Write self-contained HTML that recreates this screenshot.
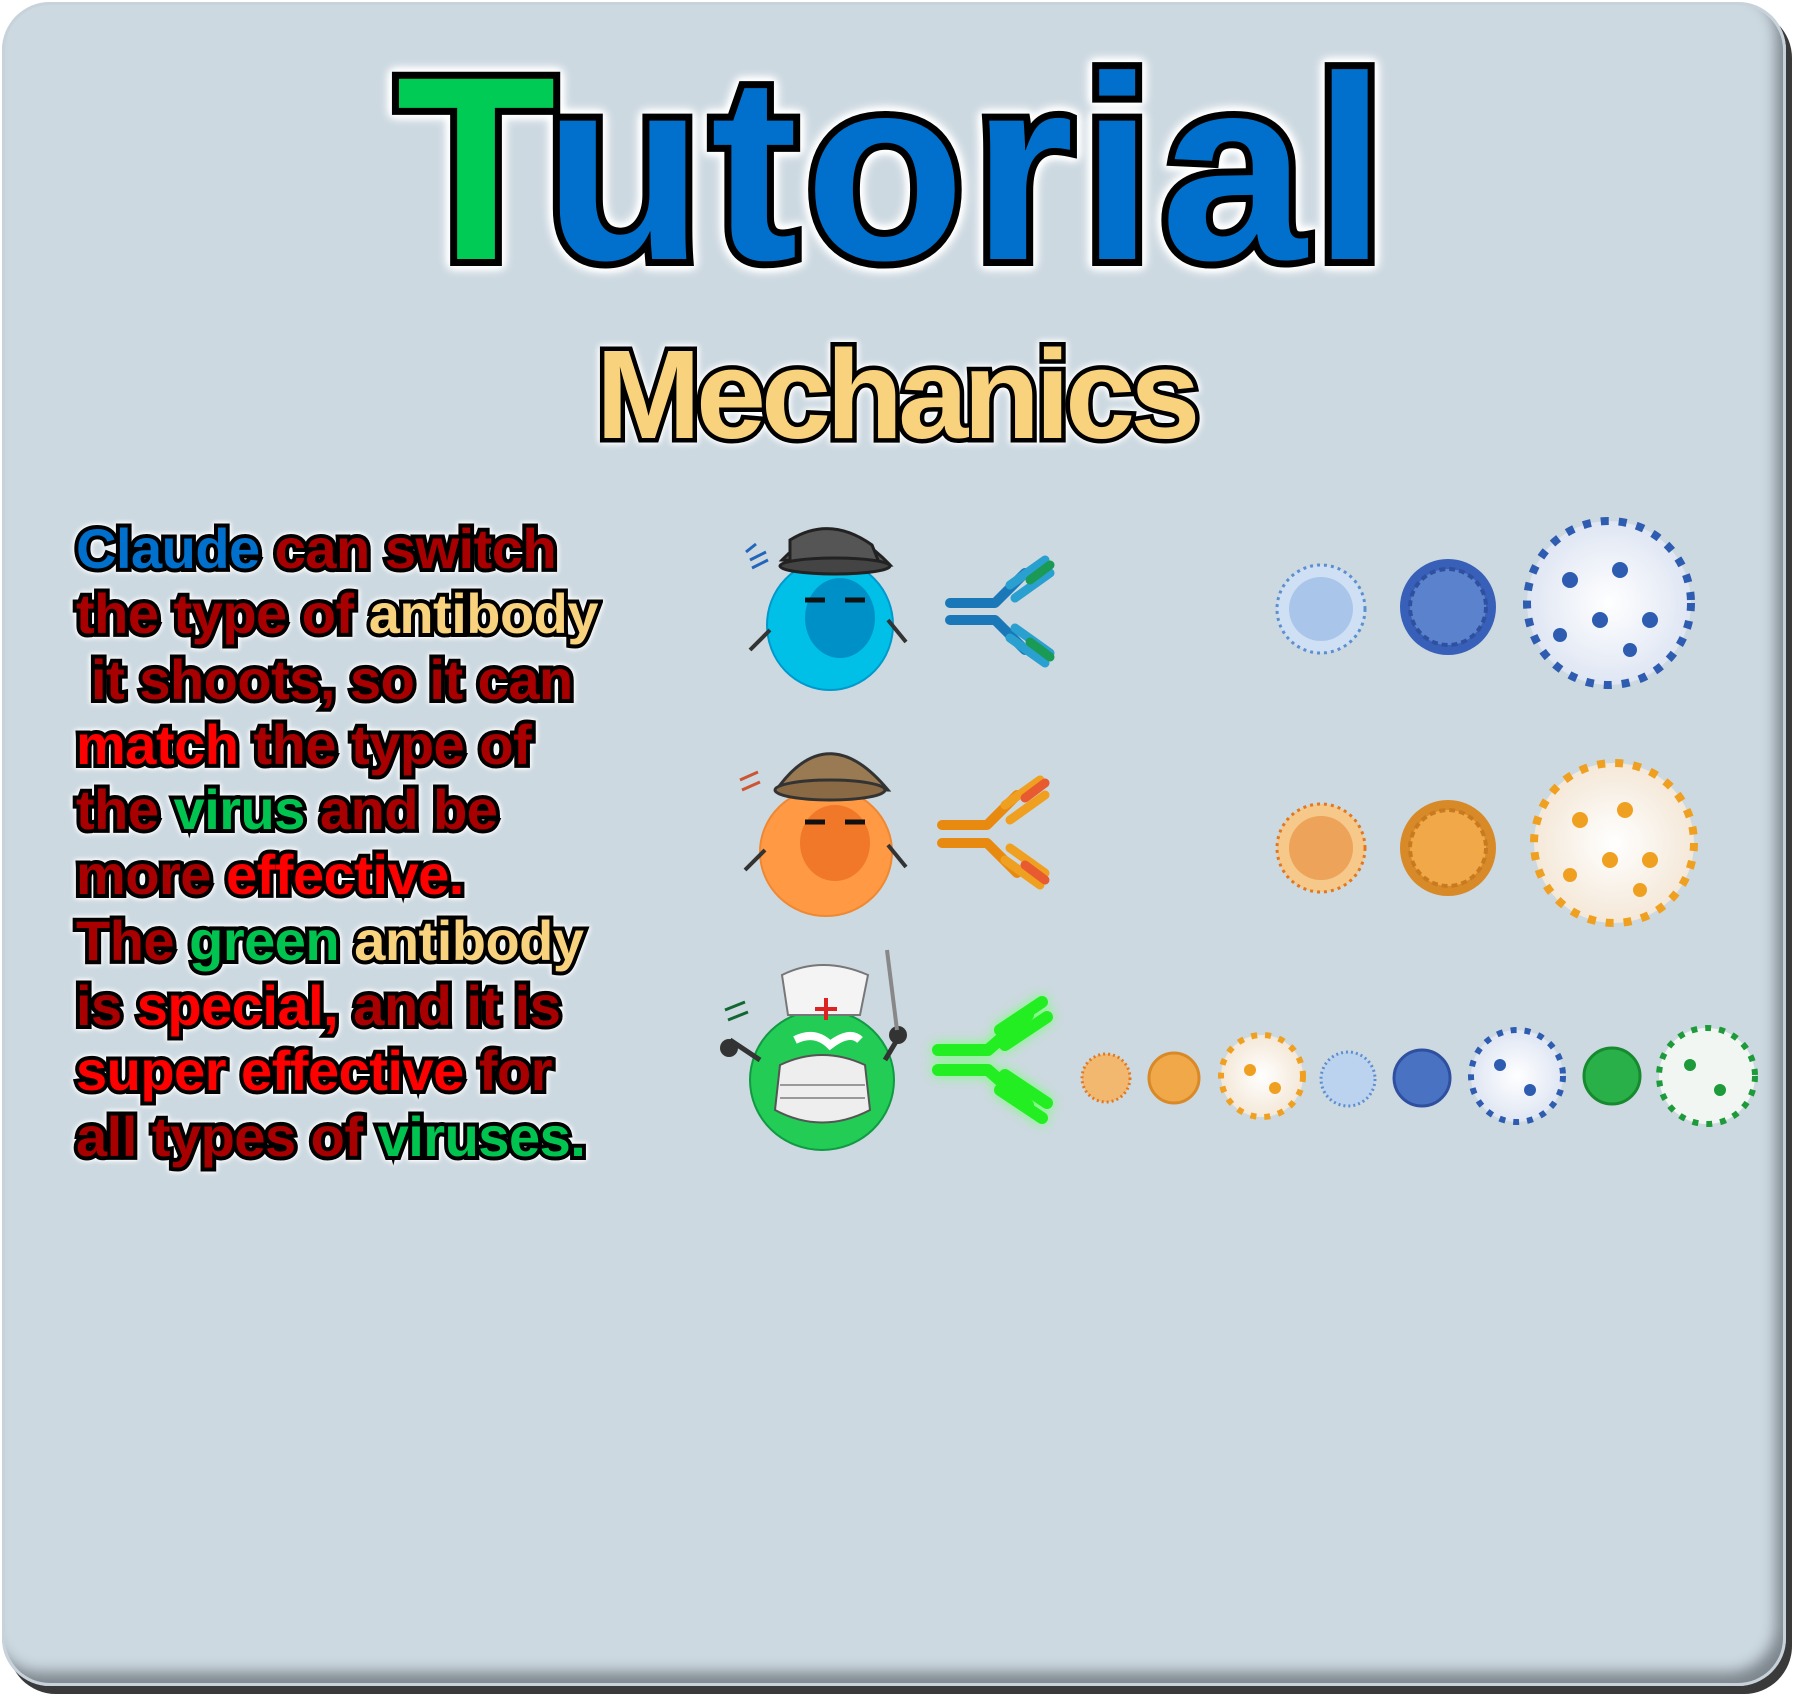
<!DOCTYPE html>
<html><head><meta charset="utf-8">
<style>
html,body{margin:0;padding:0;width:1800px;height:1700px;background:#fff;overflow:hidden}
.panel{position:absolute;left:2px;top:2px;width:1784px;height:1684px;border-radius:48px;background:#cdd9e1;
box-shadow:6px 8px 0 #3a3a3a, inset 0 0 0 3px #c8d2da, inset -10px -14px 14px #7d868d;}
.t{position:absolute;font-family:"Liberation Sans",sans-serif;font-weight:bold;paint-order:stroke fill;}
.title{left:396px;top:18px;font-size:262px;letter-spacing:7px;color:#0070cc;-webkit-text-stroke:14px #000;
filter:drop-shadow(0 0 4px #fff) drop-shadow(0 0 4px #fff) drop-shadow(0 0 3px #fff);}
.mech{left:596px;top:322px;font-size:126px;letter-spacing:-5px;color:#f8d27c;-webkit-text-stroke:9px #000;
filter:drop-shadow(0 0 3px #fff) drop-shadow(0 0 3px #fff);}
.body{left:76px;top:516px;font-size:56px;line-height:65.3px;letter-spacing:-0.5px;color:#a80000;-webkit-text-stroke:8px #000;
filter:drop-shadow(0 0 2px #fff) drop-shadow(0 0 2px #fff);white-space:pre}
.b{color:#0070cc}.y{color:#f8d27c}.g{color:#00c44f}.r{color:#f00}
</style></head><body>
<div class="panel"></div>
<div class="t title"><span style="color:#00cc55">T</span>utorial</div>
<div class="t mech">Mechanics</div>
<div class="t body"><span class="b">Claude</span> can switch
the type of <span class="y">antibody</span>
 it shoots, so it can
<span class="r">match</span> the type of
the <span class="g">virus</span> and be
more <span class="r">effective.</span>
The <span class="g">green</span> <span class="y">antibody</span>
is <span class="r">special,</span> and it is
<span class="r">super effective</span> for
all types of <span class="g">viruses.</span></div>
<svg width="1800" height="1700" style="position:absolute;left:0;top:0">
<defs>
<radialGradient id="gb" cx=".5" cy=".5" r=".5"><stop offset="0" stop-color="#fff"/><stop offset="1" stop-color="#dfe6f3"/></radialGradient>
<radialGradient id="go" cx=".5" cy=".5" r=".5"><stop offset="0" stop-color="#fff"/><stop offset="1" stop-color="#f4e8d8"/></radialGradient>
</defs>
<g>
<ellipse cx="830" cy="625" rx="63" ry="65" fill="#00c0e8" stroke="#0099cc" stroke-width="2"/>
<ellipse cx="840" cy="618" rx="35" ry="40" fill="#0090c8"/>
<path d="M782 560 Q834 505 890 565 Z" fill="#555" stroke="#222" stroke-width="3"/>
<path d="M790 540 Q830 515 872 545 L880 565 L790 565 Z" fill="#555" stroke="#222" stroke-width="3"/>
<ellipse cx="835" cy="566" rx="55" ry="8" fill="#444" stroke="#222" stroke-width="3"/>
<path d="M805 600 h20 M845 600 h20" stroke="#111" stroke-width="5"/>
<path d="M888 620 l18 22 M770 630 l-20 20" stroke="#333" stroke-width="4"/>
<path d="M750 560 l16 -8 M752 568 l16 -8 M746 552 l10 -8" stroke="#2266bb" stroke-width="3"/>
</g>
<g>
<ellipse cx="826" cy="852" rx="66" ry="64" fill="#ff9944" stroke="#ee8833" stroke-width="2"/>
<ellipse cx="835" cy="843" rx="35" ry="38" fill="#f07828"/>
<path d="M780 785 Q830 720 888 790 Z" fill="#9a7a52" stroke="#333" stroke-width="3"/>
<ellipse cx="830" cy="790" rx="55" ry="10" fill="#8a6a44" stroke="#333" stroke-width="3"/>
<path d="M805 822 h20 M845 822 h20" stroke="#111" stroke-width="5"/>
<path d="M888 845 l18 22 M765 850 l-20 20" stroke="#333" stroke-width="4"/>
<path d="M740 780 l18 -8 M742 790 l18 -8" stroke="#cc5533" stroke-width="3"/>
</g>
<g>
<ellipse cx="822" cy="1080" rx="72" ry="70" fill="#22cc55" stroke="#119944" stroke-width="2"/>
<path d="M780 1065 Q822 1045 865 1065 L870 1110 Q822 1135 775 1110 Z" fill="#eeeeee" stroke="#555" stroke-width="2"/>
<path d="M780 1085 h85 M780 1098 h85" stroke="#999" stroke-width="2"/>
<path d="M782 975 Q822 955 868 975 L860 1015 L788 1015 Z" fill="#f4f4f4" stroke="#777" stroke-width="2"/>
<path d="M826 998 v22 M815 1009 h22" stroke="#dd2222" stroke-width="4"/>
<path d="M795 1040 Q815 1030 830 1045 Q850 1030 860 1040" stroke="#fff" stroke-width="8" fill="none"/>
<path d="M760 1060 l-30 -20 M885 1060 l15 -25" stroke="#333" stroke-width="5"/>
<circle cx="729" cy="1048" r="9" fill="#333"/><circle cx="898" cy="1035" r="9" fill="#333"/>
<path d="M887 950 l10 80" stroke="#888" stroke-width="4"/>
<path d="M725 1010 l20 -8 M728 1020 l20 -8" stroke="#116633" stroke-width="3"/>
</g>
<g stroke-linecap="round">
<path d="M950 603 h45 M950 620 h45 M995 603 l30 -30 M995 620 l30 30" stroke="#1a78b8" stroke-width="10"/>
<path d="M1010 585 l35 -25 M1015 598 l35 -25 M1010 638 l35 25 M1015 628 l35 25" stroke="#2aa0d0" stroke-width="9"/>
<path d="M1030 580 l20 -15 M1030 642 l20 15" stroke="#1a9a55" stroke-width="9"/>
<path d="M942 825 h45 M942 843 h45 M987 825 l30 -30 M987 843 l30 30" stroke="#e88a10" stroke-width="10"/>
<path d="M1005 805 l35 -25 M1010 820 l35 -25 M1005 860 l35 25 M1010 848 l35 25" stroke="#f0a020" stroke-width="9"/>
<path d="M1025 798 l20 -15 M1025 865 l20 15" stroke="#e85a30" stroke-width="9"/>
<g style="filter:drop-shadow(0 0 6px #7f7)">
<path d="M938 1050 h50 M938 1070 h50 M988 1050 l40 -35 M988 1070 l40 35 M1000 1030 l42 -28 M1005 1045 l42 -28 M1000 1090 l42 28 M1005 1075 l42 28" stroke="#22ee22" stroke-width="12"/>
</g>
</g>
<g>
<circle cx="1321" cy="609" r="44" fill="#cfe0f4" stroke="#5b8fd0" stroke-width="3" stroke-dasharray="3 4"/>
<circle cx="1321" cy="609" r="32" fill="#a9c6ea"/>
<circle cx="1448" cy="607" r="48" fill="#3860b8"/><circle cx="1448" cy="607" r="38" fill="#5b82cc" stroke="#2f4f9f" stroke-width="4" stroke-dasharray="6 4"/>
<circle cx="1609" cy="603" r="82" fill="url(#gb)" stroke="#2e5cb0" stroke-width="8" stroke-dasharray="8 10"/>
<circle cx="1570" cy="580" r="8" fill="#2e5cb0"/><circle cx="1620" cy="570" r="8" fill="#2e5cb0"/><circle cx="1600" cy="620" r="8" fill="#2e5cb0"/><circle cx="1650" cy="620" r="8" fill="#2e5cb0"/><circle cx="1560" cy="635" r="7" fill="#2e5cb0"/><circle cx="1630" cy="650" r="7" fill="#2e5cb0"/>
<circle cx="1321" cy="848" r="44" fill="#f6c88a" stroke="#e07820" stroke-width="3" stroke-dasharray="3 4"/>
<circle cx="1321" cy="848" r="32" fill="#eda35a"/>
<circle cx="1448" cy="848" r="48" fill="#d98a28"/><circle cx="1448" cy="848" r="38" fill="#f0a848" stroke="#c87a20" stroke-width="4" stroke-dasharray="6 4"/>
<circle cx="1614" cy="843" r="80" fill="url(#go)" stroke="#f0a020" stroke-width="8" stroke-dasharray="8 10"/>
<circle cx="1580" cy="820" r="8" fill="#f0a020"/><circle cx="1625" cy="810" r="8" fill="#f0a020"/><circle cx="1610" cy="860" r="8" fill="#f0a020"/><circle cx="1650" cy="860" r="8" fill="#f0a020"/><circle cx="1570" cy="875" r="7" fill="#f0a020"/><circle cx="1640" cy="890" r="7" fill="#f0a020"/>
<circle cx="1106" cy="1078" r="24" fill="#f3b870" stroke="#e07820" stroke-width="3" stroke-dasharray="2 3"/>
<circle cx="1174" cy="1078" r="25" fill="#f0a848" stroke="#d98a28" stroke-width="3"/>
<circle cx="1262" cy="1076" r="41" fill="url(#go)" stroke="#f0a020" stroke-width="6" stroke-dasharray="6 8"/>
<circle cx="1348" cy="1079" r="27" fill="#bcd3f0" stroke="#5b8fd0" stroke-width="3" stroke-dasharray="2 3"/>
<circle cx="1422" cy="1078" r="28" fill="#4a72c2" stroke="#2f4f9f" stroke-width="3"/>
<circle cx="1517" cy="1076" r="46" fill="url(#gb)" stroke="#2e5cb0" stroke-width="6" stroke-dasharray="6 8"/>
<circle cx="1612" cy="1076" r="28" fill="#2ab048" stroke="#178a30" stroke-width="3"/>
<circle cx="1707" cy="1076" r="48" fill="#f2f6f2" stroke="#1d9a3a" stroke-width="6" stroke-dasharray="6 8"/>
<circle cx="1690" cy="1065" r="6" fill="#1d9a3a"/><circle cx="1720" cy="1090" r="6" fill="#1d9a3a"/><circle cx="1500" cy="1065" r="6" fill="#2e5cb0"/><circle cx="1530" cy="1090" r="6" fill="#2e5cb0"/><circle cx="1250" cy="1070" r="6" fill="#f0a020"/><circle cx="1275" cy="1088" r="6" fill="#f0a020"/>
</g>
</svg>
</body></html>
